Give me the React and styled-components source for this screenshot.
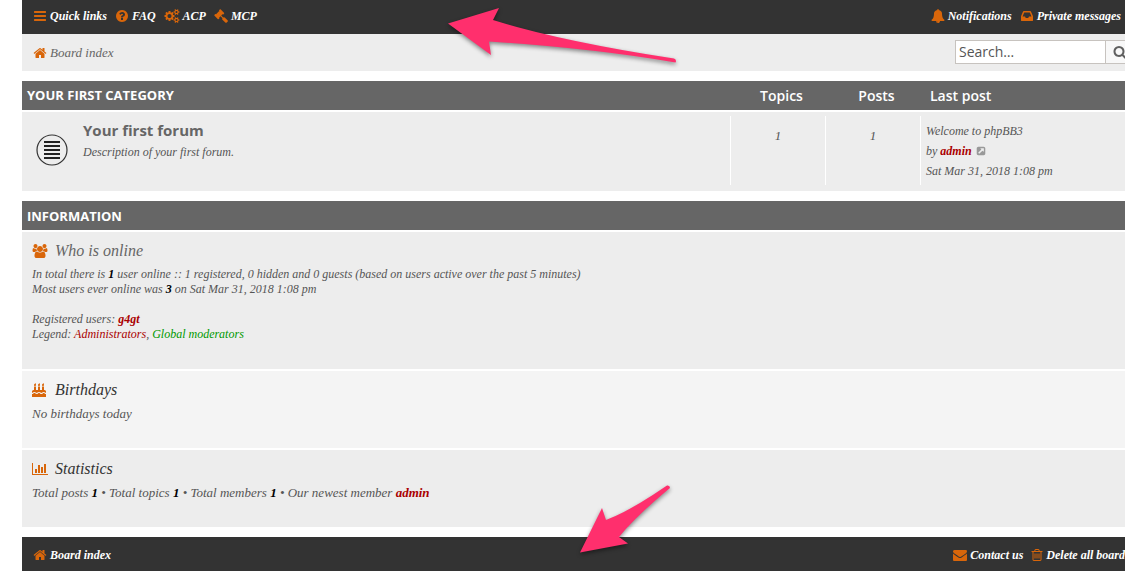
import React from 'react';
import styled, { createGlobalStyle, css } from 'styled-components';

const script = '"Liberation Serif", "Times New Roman", serif';
const sans = '"Open Sans", "Liberation Sans", sans-serif';

const GlobalStyle = createGlobalStyle`
  * { box-sizing: border-box; }
  body {
    margin: 0;
    background: #fff;
    color: #555;
    font: italic 13px/15px ${script};
    overflow-x: hidden;
  }
  a { color: inherit; text-decoration: none; }
  a:hover { text-decoration: underline; }
  p, h2, h3, ul { margin: 0; padding: 0; }
  ul { list-style: none; }
`;

const ICONS = {
  bars: [1792, 'M1664 1344v128q0 26-19 45t-45 19h-1408q-26 0-45-19t-19-45v-128q0-26 19-45t45-19h1408q26 0 45 19t19 45zm0-512v128q0 26-19 45t-45 19h-1408q-26 0-45-19t-19-45v-128q0-26 19-45t45-19h1408q26 0 45 19t19 45zm0-512v128q0 26-19 45t-45 19h-1408q-26 0-45-19t-19-45v-128q0-26 19-45t45-19h1408q26 0 45 19t19 45z'],
  question: [1792, 'M1024 1376v-192q0-14-9-23t-23-9h-192q-14 0-23 9t-9 23v192q0 14 9 23t23 9h192q14 0 23-9t9-23zm256-672q0-88-55.5-163t-138.5-116-170-41q-243 0-371 213-15 24 8 42l132 100q7 6 19 6 16 0 25-12 53-68 86-92 34-24 86-24 48 0 85.5 26t37.5 59q0 38-20 61t-68 45q-63 28-115.5 86.5t-52.5 125.5v36q0 14 9 23t23 9h192q14 0 23-9t9-23q0-19 21.5-49.5t54.5-49.5q32-18 49-28.5t46-35 44.5-48 28-60.5 12.5-81zm384 192q0 209-103 385.5t-279.5 279.5-385.5 103-385.5-103-279.5-279.5-103-385.5 103-385.5 279.5-279.5 385.5-103 385.5 103 279.5 279.5 103 385.5z'],
  cogs: [2048, 'M960 896q0-106-75-181t-181-75-181 75-75 181 75 181 181 75 181-75 75-181zm768 512q0-52-38-90t-90-38-90 38-38 90q0 53 37.5 90.5t90.5 37.5 90.5-37.5 37.5-90.5zm0-1024q0-52-38-90t-90-38-90 38-38 90q0 53 37.5 90.5t90.5 37.5 90.5-37.5 37.5-90.5zm-384 421v185q0 10-7 19.5t-16 10.5l-155 24q-11 35-32 76 34 48 90 115 7 11 7 20 0 12-7 19-23 30-82.5 89.5t-78.5 59.5q-11 0-21-7l-115-90q-37 19-77 31-11 108-23 155-7 24-30 24h-186q-11 0-20-7.5t-10-17.5l-23-153q-34-10-75-31l-118 89q-7 7-20 7-11 0-21-8-144-133-144-160 0-9 7-19 10-14 41-53t47-61q-23-44-35-82l-152-24q-10-1-17-9.5t-7-19.5v-185q0-10 7-19.5t16-10.5l155-24q11-35 32-76-34-48-90-115-7-11-7-20 0-12 7-20 22-30 82-89t79-59q11 0 21 7l115 90q34-18 77-32 11-108 23-154 7-24 30-24h186q11 0 20 7.5t10 17.5l23 153q34 10 75 31l118-89q8-7 20-7 11 0 21 8 144 133 144 160 0 8-7 19-12 16-42 54t-45 60q23 48 34 82l152 23q10 2 17 10.5t7 19.5zm640 533v140q0 16-149 31-12 27-30 52 51 113 51 138 0 4-4 7-122 71-124 71-8 0-46-47t-52-68q-20 2-30 2t-30-2q-14 21-52 68t-46 47q-2 0-124-71-4-3-4-7 0-25 51-138-18-25-30-52-149-15-149-31v-140q0-16 149-31 13-29 30-52-51-113-51-138 0-4 4-7 4-2 35-20t59-34 30-16q8 0 46 46.5t52 67.5q20-2 30-2t30 2q51-71 92-112l6-2q4 0 124 70 4 3 4 7 0 25-51 138 17 23 30 52 149 15 149 31zm0-1024v140q0 16-149 31-12 27-30 52 51 113 51 138 0 4-4 7-122 71-124 71-8 0-46-47t-52-68q-20 2-30 2t-30-2q-14 21-52 68t-46 47q-2 0-124-71-4-3-4-7 0-25 51-138-18-25-30-52-149-15-149-31v-140q0-16 149-31 13-29 30-52-51-113-51-138 0-4 4-7 4-2 35-20t59-34 30-16q8 0 46 46.5t52 67.5q20-2 30-2t30 2q51-71 92-112l6-2q4 0 124 70 4 3 4 7 0 25-51 138 17 23 30 52 149 15 149 31z'],
  gavel: [1792, 'M1771 1536q0 53-37 90l-107 108q-39 37-91 37-53 0-90-37l-363-364q-38-36-38-90 0-53 43-96l-256-256-126 126q-14 14-34 14t-34-14q2 2 12.5 12t12.5 13 10 11.5 10 13.5 6 13.5 5.5 16.5 1.5 18q0 38-28 68-3 3-16.5 18t-19 20.5-18.5 16.5-22 15.5-22 9-26 4.5q-40 0-68-28l-408-408q-28-28-28-68 0-13 4.5-26t9-22 15.5-22 16.5-18.5 20.5-19 18-16.5q30-28 68-28 10 0 18 1.5t16.5 5.5 13.5 6 13.5 10 11.5 10 13 12.5 12 12.5q-14-14-14-34t14-34l348-348q14-14 34-14t34 14q-2-2-12.5-12t-12.5-13-10-11.5-10-13.5-6-13.5-5.5-16.5-1.5-18q0-38 28-68 3-3 16.5-18t19-20.5 18.5-16.5 22-15.5 22-9 26-4.5q40 0 68 28l408 408q28 28 28 68 0 13-4.5 26t-9 22-15.5 22-16.5 18.5-20.5 19-18 16.5q-30 28-68 28-10 0-18-1.5t-16.5-5.5-13.5-6-13.5-10-11.5-10-13-12.5-12-12.5q14 14 14 34t-14 34l-126 126 256 256q43-43 96-43 52 0 91 37l363 363q37 39 37 91z'],
  bell: [1792, 'M912 1696q0-16-16-16-59 0-101.5-42.5t-42.5-101.5q0-16-16-16t-16 16q0 73 51.5 124.5t124.5 51.5q16 0 16-16zm816-288q0 52-38 90t-90 38h-448q0 106-75 181t-181 75-181-75-75-181h-448q-52 0-90-38t-38-90q50-42 91-88t85-119.5 74.5-158.5 50-206 19.5-260q0-152 117-282.5t307-158.5q-8-19-8-39 0-40 28-68t68-28 68 28 28 68q0 20-8 39 190 28 307 158.5t117 282.5q0 139 19.5 260t50 206 74.5 158.5 85 119.5 91 88z'],
  inbox: [1792, 'M1151 960h316q-1-3-2.5-8t-2.5-8l-212-496h-708l-212 496q-1 2-2.5 8t-2.5 8h316l95 192h320zm513 30v482q0 26-19 45t-45 19h-1408q-26 0-45-19t-19-45v-482q0-62 25-123l238-552q10-25 36.5-42t52.5-17h832q26 0 52.5 17t36.5 42l238 552q25 61 25 123z'],
  home: [1792, 'M1472 992v480q0 26-19 45t-45 19h-384v-384h-256v384h-384q-26 0-45-19t-19-45v-480q0-1 .5-3t.5-3l575-474 575 474q1 2 1 6zm223-69l-62 74q-8 9-21 11h-3q-13 0-21-7l-692-577-692 577q-12 8-24 7-13-2-21-11l-62-74q-8-10-7-23.5t11-21.5l719-599q32-26 76-26t76 26l244 204v-195q0-14 9-23t23-9h192q14 0 23 9t9 23v408l219 182q10 8 11 21.5t-7 23.5z'],
  search: [1792, 'M1216 832q0-185-131.5-316.5t-316.5-131.5-316.5 131.5-131.5 316.5 131.5 316.5 316.5 131.5 316.5-131.5 131.5-316.5zm512 832q0 52-38 90t-90 38q-54 0-90-38l-343-342q-179 124-399 124-143 0-273.5-55.5t-225-150-150-225-55.5-273.5 55.5-273.5 150-225 225-150 273.5-55.5 273.5 55.5 225 150 150 225 55.5 273.5q0 220-124 399l343 343q37 37 37 90z'],
  envelope: [1792, 'M1792 710v794q0 66-47 113t-113 47h-1472q-66 0-113-47t-47-113v-794q44 49 101 87 362 246 497 345 57 42 92.5 65.5t94.5 48 110 24.5h2q51 0 110-24.5t94.5-48 92.5-65.5q170-123 498-345 57-39 100-87zm0-294q0 79-49 151t-122 123q-376 261-468 325-10 7-42.5 31t-54 38.5-52 32.5-57.5 27-50 9h-2q-23 0-50-9t-57.5-27-52-32.5-54-38.5-42.5-31q-91-64-262-182.5t-205-142.5q-62-42-117-115.5t-55-136.5q0-78 41.5-130t118.5-52h1472q65 0 112.5 47t47.5 113z'],
  trash: [1536, 'M576 736v576q0 14-9 23t-23 9h-64q-14 0-23-9t-9-23v-576q0-14 9-23t23-9h64q14 0 23 9t9 23zm256 0v576q0 14-9 23t-23 9h-64q-14 0-23-9t-9-23v-576q0-14 9-23t23-9h64q14 0 23 9t9 23zm256 0v576q0 14-9 23t-23 9h-64q-14 0-23-9t-9-23v-576q0-14 9-23t23-9h64q14 0 23 9t9 23zm128 724v-948h-896v948q0 22 7 40.5t14.5 27 10.5 8.5h832q3 0 10.5-8.5t14.5-27 7-40.5zm-672-1076h448l-48-117q-7-9-17-11h-317q-10 2-17 11zm928 32v64q0 14-9 23t-23 9h-96v948q0 83-47 143.5t-113 60.5h-832q-66 0-113-58.5t-47-141.5v-952h-96q-14 0-23-9t-9-23v-64q0-14 9-23t23-9h309l70-167q15-37 54-63t79-26h320q40 0 79 26t54 63l70 167h309q14 0 23 9t9 23z'],
  external: [1792, 'M1408 928v-480q0-26-19-45t-45-19h-480q-42 0-59 39-17 41 14 70l144 144-534 534q-19 19-19 45t19 45l102 102q19 19 45 19t45-19l534-534 144 144q18 19 45 19 12 0 25-5 39-17 39-59zm256-512v960q0 119-84.5 203.5t-203.5 84.5h-960q-119 0-203.5-84.5t-84.5-203.5v-960q0-119 84.5-203.5t203.5-84.5h960q119 0 203.5 84.5t84.5 203.5z'],
  users: [2048, 'M657 896q-162 5-265 128h-134q-82 0-138-40.5t-56-118.5q0-353 124-353 6 0 43.5 21t97.5 42.5 119 21.5q67 0 133-23-5 37-5 66 0 139 81 256zm1071 637q0 120-73 189.5t-194 69.5h-874q-121 0-194-69.5t-73-189.5q0-53 3.5-103.5t14-109 26.5-108.5 43-97.5 62-81 85.5-53.5 111.5-20q10 0 43 21.5t73 48 107 48 135 21.5 135-21.5 107-48 73-48 43-21.5q61 0 111.5 20t85.5 53.5 62 81 43 97.5 26.5 108.5 14 109 3.5 103.5zm-1024-1277q0 106-75 181t-181 75-181-75-75-181 75-181 181-75 181 75 75 181zm704 384q0 159-112.5 271.5t-271.5 112.5-271.5-112.5-112.5-271.5 112.5-271.5 271.5-112.5 271.5 112.5 112.5 271.5zm576 225q0 78-56 118.5t-138 40.5h-134q-103-123-265-128 81-117 81-256 0-29-5-66 66 23 133 23 59 0 119-21.5t97.5-42.5 43.5-21q124 0 124 353zm-128-609q0 106-75 181t-181 75-181-75-75-181 75-181 181-75 181 75 75 181z'],
  cake: [1792, 'M1792 1408v384H0v-384q90 0 144-42 60-50 96-76 60-20 120 0 40 25 90 66 70 52 142 52 84 0 144-42 60-50 100-76 60-20 120 0 40 25 96 76 60 42 144 42t144-42q60-50 96-76 60-20 120 0 40 25 96 76 60 42 140 42zM1792 1088v192q-60 0-108-49-70-79-190-79t-190 79q-108 98-216 0-72-79-192-79t-190 79q-108 98-216 0-72-79-190-79-120 0-190 79-50 49-110 49v-192q0-80 56-136t136-56h64V448h256v448h256V448h256v448h256V448h256v448h64q80 0 136 56t56 136zM512 224q0 77-36 118.5T384 384q-53 0-90.5-37.5T256 256q0-48 33-85 62-55 79-86 16-35 16-85 38 0 83 74t45 150zM1024 224q0 77-36 118.5T896 384q-53 0-90.5-37.5T768 256q0-48 33-85 62-55 79-86 16-35 16-85 38 0 83 74t45 150zM1536 224q0 77-36 118.5t-92 41.5q-53 0-90.5-37.5T1280 256q0-48 33-85 62-55 79-86 16-35 16-85 38 0 83 74t45 150z'],
  chart: [2048, 'M640 896v512h-256v-512h256zm384-512v1024h-256v-1024h256zm1024 1152v128h-2048v-1536h128v1408h1920zm-640-896v768h-256v-768h256zm384-384v1152h-256v-1152h256z'],
};

const Glyph = styled.svg`
  display: block;
  flex: none;
  height: ${p => p.$size}px;
  fill: ${p => p.$color};
`;

function Icon({ name, size = 14, color = '#d9660a' }) {
  const [w, d] = ICONS[name];
  return (
    <Glyph $size={size} $color={color} viewBox={`0 0 ${w} 1792`} aria-hidden="true">
      <path d={d} />
    </Glyph>
  );
}

const Page = styled.div`
  position: relative;
  padding-left: 22px;
  overflow: hidden;
`;

const NavBar = styled.nav`
  display: flex;
  justify-content: space-between;
  align-items: center;
  height: 34px;
  padding: 0 4px 2px 11px;
  background: #333;
`;

const FootBar = styled(NavBar)`
  padding: 2px 0 0 11px;
  margin-top: 10px;
`;

const NavList = styled.ul`
  display: flex;
  gap: 8px;
`;

const NavLink = styled.a`
  display: flex;
  align-items: center;
  gap: 3px;
  white-space: nowrap;
  color: ${p => (p.$muted ? '#666' : '#fff')};
  font-weight: ${p => (p.$muted ? 400 : 700)};
  font-size: ${p => (p.$muted ? 13 : 12)}px;
`;

const CrumbBar = styled.div`
  display: flex;
  justify-content: space-between;
  align-items: center;
  height: 37px;
  padding-left: 11px;
  margin-bottom: 10px;
  background: #ededed;
`;

const SearchForm = styled.form`
  display: flex;
  width: 170px;
  height: 24px;
  margin-bottom: 2px;
`;

const SearchInput = styled.input`
  flex: 1;
  min-width: 0;
  padding: 0 3px;
  border: 1px solid #c7c3bf;
  border-radius: 0;
  background: #fff;
  color: #333;
  font: 14px ${sans};
  &::placeholder { color: #555; opacity: 1; }
`;

const SearchButton = styled.button`
  width: 19px;
  padding: 0 0 0 7px;
  border: 1px solid #c7c3bf;
  border-width: 1px 0;
  background: #f8f8f8;
  overflow: hidden;
`;

const ForumTable = styled.table`
  width: 100%;
  table-layout: fixed;
  border-collapse: collapse;
  margin-bottom: 10px;
`;

const headText = css`
  height: 29px;
  background: #666;
  color: #fff;
  font: 700 13px/30px ${sans};
`;

const HeadCell = styled.th`
  ${headText}
  line-height: 29px;
  width: ${p => (p.$width ? `${p.$width}px` : 'auto')};
  padding: 0 0 0 ${p => p.$indent}px;
  text-align: ${p => p.$align || 'left'};
  font-weight: ${p => (p.$indent === 5 ? 700 : 600)};
  font-size: ${p => (p.$indent === 5 ? 13 : 14)}px;
`;

const BodyCell = styled.td`
  padding: 4px 0 6px;
  border-top: 2px solid #fff;
  background: #ededed;
  vertical-align: top;
`;

const ForumSummary = styled.div`
  display: flex;
  gap: 15px;
  padding: 4px 0 0 14px;
`;

const ForumIcon = styled.svg`
  display: block;
  width: 32px;
  height: 32px;
  margin-top: 14px;
`;

const ForumTitle = styled.a`
  display: block;
  color: #666;
  font: 700 15px/20px ${sans};
`;

const ForumText = styled.p`
  font-size: 12px;
  line-height: 24px;
`;

const Stat = styled.div`
  height: 69px;
  padding-top: 12px;
  border-left: 1px solid #fff;
  text-align: center;
  line-height: 16px;
`;

const LastPost = styled.div`
  height: 69px;
  padding: 5px 0 0 5px;
  border-left: 1px solid #fff;
  font-size: 12px;
  line-height: 20px;
`;

const PostLine = styled.div`
  display: flex;
  align-items: center;
  gap: 4px;
`;

const User = styled.a`
  color: ${p => p.$color || '#a00'};
  font-weight: ${p => (p.$plain ? 400 : 700)};
`;

const InfoHead = styled.h2`
  ${headText}
  padding-left: 5px;
`;

const InfoBlock = styled.section`
  height: ${p => (p.$tall ? 139 : 79)}px;
  padding: 8px 10px 0;
  border-top: 2px solid #fff;
  background: ${p => (p.$light ? '#f4f4f4' : '#ededed')};
  font-size: ${p => (p.$tall ? 12 : 13)}px;
  strong { color: #000; }
`;

const InfoTitle = styled.h3`
  display: grid;
  grid-template-columns: 16px auto;
  align-items: center;
  gap: 7px;
  margin-bottom: 5px;
  color: ${p => (p.$muted ? '#666' : '#333')};
  font-weight: 400;
  font-size: 16px;
  line-height: 22px;
`;

const Paragraph = styled.p`
  margin-bottom: 15px;
`;

const Arrow = styled.svg`
  position: absolute;
  top: 0;
  left: 0;
  width: 700px;
  height: 571px;
  pointer-events: none;
  filter: drop-shadow(0 2px 2px rgba(0, 0, 0, 0.45));
`;

function NavItem({ icon, children, muted }) {
  return (
    <li>
      <NavLink href="#" $muted={muted}>
        <Icon name={icon} />
        {children}
      </NavLink>
    </li>
  );
}

export default function App() {
  return (
    <>
      <GlobalStyle />
      <Page>
        <NavBar>
          <NavList>
            <NavItem icon="bars">Quick links</NavItem>
            <NavItem icon="question">FAQ</NavItem>
            <NavItem icon="cogs">ACP</NavItem>
            <NavItem icon="gavel">MCP</NavItem>
          </NavList>
          <NavList>
            <NavItem icon="bell">Notifications</NavItem>
            <NavItem icon="inbox">Private messages</NavItem>
          </NavList>
        </NavBar>

        <CrumbBar>
          <NavLink href="#" $muted>
            <Icon name="home" />
            Board index
          </NavLink>
          <SearchForm role="search">
            <SearchInput type="search" placeholder="Search…" aria-label="Search" />
            <SearchButton type="button" aria-label="Submit search">
              <Icon name="search" color="#606060" />
            </SearchButton>
          </SearchForm>
        </CrumbBar>

        <ForumTable>
          <thead>
            <tr>
              <HeadCell $indent={5}>YOUR FIRST CATEGORY</HeadCell>
              <HeadCell $width={95} $indent={8} $align="center">Topics</HeadCell>
              <HeadCell $width={95} $indent={8} $align="center">Posts</HeadCell>
              <HeadCell $width={205} $indent={10}>Last post</HeadCell>
            </tr>
          </thead>
          <tbody>
            <tr>
              <BodyCell>
                <ForumSummary>
                  <ForumIcon viewBox="0 0 32 32" aria-hidden="true">
                    <circle cx="16" cy="16" r="15" fill="none" stroke="#333" strokeWidth="1.2" />
                    <path d="M8 8h16M8 12h16M8 16h16M8 20h16M8 24h16" stroke="#222" strokeWidth="2" />
                  </ForumIcon>
                  <div>
                    <ForumTitle href="#">Your first forum</ForumTitle>
                    <ForumText>Description of your first forum.</ForumText>
                  </div>
                </ForumSummary>
              </BodyCell>
              <BodyCell><Stat>1</Stat></BodyCell>
              <BodyCell><Stat>1</Stat></BodyCell>
              <BodyCell>
                <LastPost>
                  <a href="#">Welcome to phpBB3</a>
                  <PostLine>
                    <span>by <User href="#">admin</User></span>
                    <a href="#" aria-label="View the latest post">
                      <Icon name="external" size={10} color="#999" />
                    </a>
                  </PostLine>
                  Sat Mar 31, 2018 1:08 pm
                </LastPost>
              </BodyCell>
            </tr>
          </tbody>
        </ForumTable>

        <InfoHead>INFORMATION</InfoHead>
        <InfoBlock $tall>
          <InfoTitle $muted><Icon name="users" /><a href="#">Who is online</a></InfoTitle>
          <Paragraph>
            In total there is <strong>1</strong> user online :: 1 registered, 0 hidden and 0 guests (based on users active over the past 5 minutes)
            <br />
            Most users ever online was <strong>3</strong> on Sat Mar 31, 2018 1:08 pm
          </Paragraph>
          <p>
            Registered users: <User href="#">g4gt</User>
            <br />
            Legend: <User href="#" $plain>Administrators</User>, <User href="#" $plain $color="#090">Global moderators</User>
          </p>
        </InfoBlock>
        <InfoBlock $light>
          <InfoTitle><Icon name="cake" />Birthdays</InfoTitle>
          <p>No birthdays today</p>
        </InfoBlock>
        <InfoBlock>
          <InfoTitle><Icon name="chart" />Statistics</InfoTitle>
          <p>
            Total posts <strong>1</strong> • Total topics <strong>1</strong> • Total members <strong>1</strong> • Our newest member <User href="#">admin</User>
          </p>
        </InfoBlock>

        <FootBar>
          <NavList>
            <NavItem icon="home">Board index</NavItem>
          </NavList>
          <NavList>
            <NavItem icon="envelope">Contact us</NavItem>
            <NavItem icon="trash">Delete all board</NavItem>
          </NavList>
        </FootBar>

        <Arrow viewBox="0 0 700 571" aria-hidden="true">
          <path fill="#ff2f6d" d="M448 23.5L499 8L493 20Q560 41 674 58.500Q677 60 675.500 62.500Q590 48 489 41.500L491 55Z" />
          <path fill="#ff2f6d" d="M580 552.500L602 508L606 520Q630 511 667 485.500Q670 485 670 488Q635 517 619 537L628 543.500Z" />
        </Arrow>
      </Page>
    </>
  );
}
